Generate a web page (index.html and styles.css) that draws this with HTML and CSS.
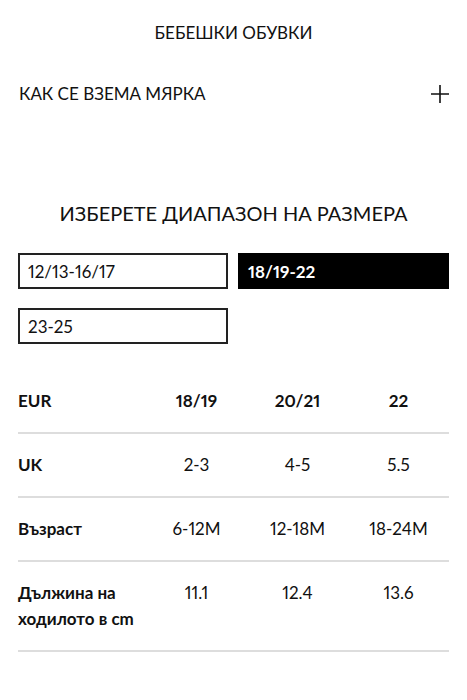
FILE: index.html
```html
<!DOCTYPE html>
<html lang="bg">
<head>
<meta charset="utf-8">
<link rel="stylesheet" href="styles.css">
</head>
<body>
<div class="page">
  <h1 class="title">БЕБЕШКИ ОБУВКИ</h1>
  <div class="accordion">
    <span class="acc-label">КАК СЕ ВЗЕМА МЯРКА</span>
    <svg class="plus" width="18" height="18" viewBox="0 0 18 18"><path d="M9 0V18M0 9H18" stroke="#111" stroke-width="1.6" fill="none"/></svg>
  </div>
  <h2 class="subtitle">ИЗБЕРЕТЕ ДИАПАЗОН НА РАЗМЕРА</h2>
  <div class="ranges">
    <button class="range">12/13-16/17</button>
    <button class="range active">18/19-22</button>
    <button class="range">23-25</button>
  </div>
  <table class="sizes">
    <tr>
      <th class="label">EUR</th><th>18/19</th><th>20/21</th><th>22</th>
    </tr>
    <tr>
      <th class="label">UK</th><td>2-3</td><td>4-5</td><td>5.5</td>
    </tr>
    <tr>
      <th class="label">Възраст</th><td>6-12M</td><td>12-18M</td><td>18-24M</td>
    </tr>
    <tr>
      <th class="label">Дължина на ходилото в cm</th><td>11.1</td><td>12.4</td><td>13.6</td>
    </tr>
  </table>
</div>
</body>
</html>
```

FILE: styles.css
```css
* { box-sizing: border-box; }
html, body { margin: 0; background: #fff; }
body {
  font-family: "Lato", "Noto Sans", sans-serif;
  font-variant-numeric: proportional-nums;
  color: #111;
}
.page { padding: 0 18px; }
.title {
  margin: 0;
  padding-top: 21px;
  font-size: 17px;
  line-height: 24px;
  font-weight: 400;
  text-align: center;
}
.accordion {
  display: flex;
  justify-content: space-between;
  align-items: center;
  margin-top: 37px;
  height: 24px;
}
.acc-label { font-size: 17px; line-height: 24px; padding-left: 1px; }
.plus { display: block; }
.subtitle {
  margin: 93px 0 0;
  font-size: 20px;
  line-height: 28px;
  font-weight: 400;
  text-align: center;
}
.ranges {
  display: grid;
  grid-template-columns: 210px 211px;
  column-gap: 10px;
  row-gap: 19px;
  margin-top: 26px;
}
.range {
  height: 36px;
  border: 2px solid #222;
  background: #fff;
  color: #111;
  font-family: inherit;
  font-variant-numeric: proportional-nums;
  font-size: 17px;
  text-align: left;
  padding: 0 8px;
  margin: 0;
}
.range.active {
  background: #000;
  border-color: #000;
  color: #fff;
  font-weight: 700;
}
.sizes {
  width: 431px;
  margin-top: 26px;
  border-collapse: collapse;
  table-layout: fixed;
  font-size: 17px;
}
.sizes tr { border-bottom: 2px solid #ddd; }
.sizes th, .sizes td {
  padding: 18px 0;
  line-height: 26px;
  text-align: center;
  vertical-align: top;
}
.sizes th { font-weight: 700; }
.sizes td { font-weight: 400; }
.sizes .label { text-align: left; width: 128px; padding-right: 6px; }
```
